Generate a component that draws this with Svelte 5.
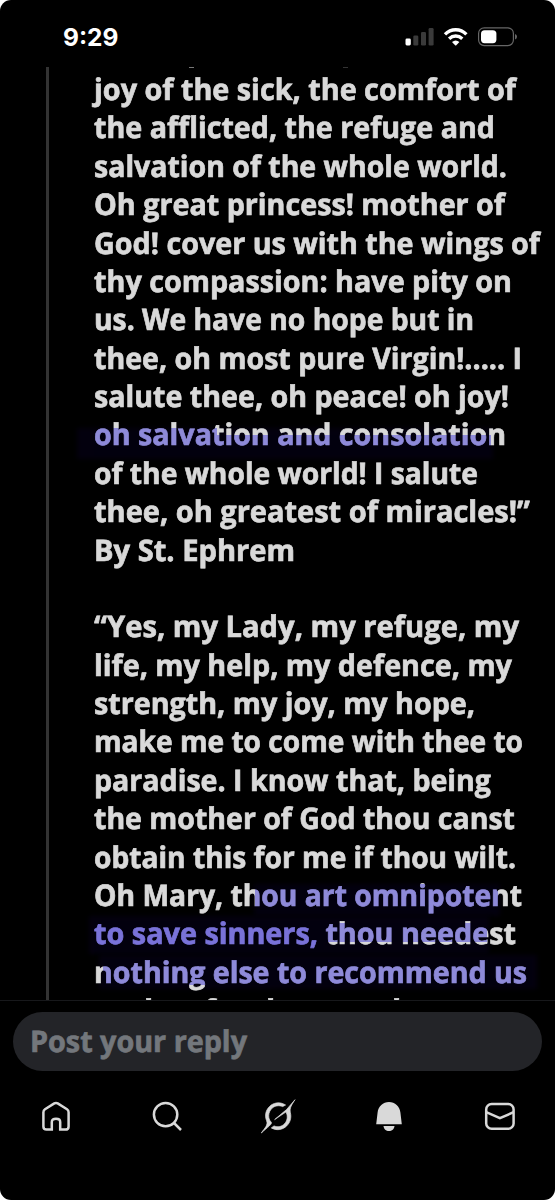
<script>
  const pitch = 38.38;
  // [text, right edge of the line]
  const lines = [
    ['joy of the sick, the comfort of', 516],
    ['the afflicted, the refuge and', 495],
    ['salvation of the whole world.', 507],
    ['Oh great princess! mother of', 505],
    ['God! cover us with the wings of', 540],
    ['thy compassion: have pity on', 512],
    ['us. We have no hope but in', 474],
    ['thee, oh most pure Virgin!..... I', 522],
    ['salute thee, oh peace! oh joy!', 509],
    ['oh salvation and consolation', 506],
    ['of the whole world! I salute', 478],
    ['thee, oh greatest of miracles!”', 530],
    ['By St. Ephrem', 295],
    ['', 0],
    ['“Yes, my Lady, my refuge, my', 519],
    ['life, my help, my defence, my', 512],
    ['strength, my joy, my hope,', 475],
    ['make me to come with thee to', 523],
    ['paradise. I know that, being', 491],
    ['the mother of God thou canst', 515],
    ['obtain this for me if thou wilt.', 516],
    ['Oh Mary, thou art omnipotent', 522],
    ['to save sinners, thou needest', 516],
    ['nothing else to recommend us', 527],
    ['to thee for thou art the', 428]
  ];
</script>

<div class="phone">
  <header>
    <span class="time">9:29</span>
    <svg class="status" width="116" height="24" viewBox="402 25 116 24">
      <rect x="405.5" y="38.5" width="5.3" height="7" rx="1.4" fill="#fff" />
      <g fill="#3a3a3a">
        <rect x="413.3" y="35.5" width="5" height="10" rx="1.3" />
        <rect x="421" y="32" width="5" height="13.5" rx="1.3" />
        <rect x="428.6" y="28" width="5" height="17.5" rx="1.3" />
      </g>
      <g fill="none" stroke="#fff" stroke-width="3.3">
        <path d="M445 34.4 C451 28.2 460.400 28.2 466.400 34.4" />
        <path d="M449.100 38.800 C453 35.100 458.400 35.100 462.300 38.800" />
      </g>
      <path d="M452 42 Q455.700 39 459.400 42 L456.300 45.200 Q455.700 45.800 455.100 45.200 Z" fill="#fff" />
      <rect x="478.600" y="27.800" width="34.800" height="17.800" rx="5.600" fill="none" stroke="#666" stroke-width="1.200" />
      <path d="M515 34 v5.600 q2-.8 2-2.800 t-2-2.800z" fill="#666" />
      <rect x="481" y="30.200" width="15.400" height="13" rx="3.600" fill="#fff" />
    </svg>
  </header>

  <main>
    <div class="thread"></div>
    <article>
      <i class="tail one"></i><i class="tail two"></i>
      <div class="glow a"></div>
      <div class="glow b"></div>
      <div class="glow c"></div>
      <div class="glow d"></div>
      {#each lines as [text, right]}
        <svg class="line" width="461" height={pitch} viewBox="0 0 461 {pitch}">
          {#if text}<text x="0" y="28.4" textLength={right - 94} lengthAdjust="spacingAndGlyphs">{text}</text>{/if}
        </svg>
      {/each}
      <div class="ink a1"></div>
      <div class="ink a2"></div>
      <div class="ink b1"></div>
      <div class="ink c1"></div>
      <div class="ink c2"></div>
      <div class="ink d1"></div>
    </article>
  </main>

  <footer>
    <div class="reply">
      <svg width="240" height="58" viewBox="0 0 240 58"><text x="0" y="39.500" textLength="217" lengthAdjust="spacingAndGlyphs">Post your reply</text></svg>
    </div>
    <nav>
      <svg viewBox="0 0 40 40"><path d="M7.400 16.200 Q7.400 14.300 9 13.200 L18.300 7.400 Q20 6.400 21.700 7.400 L31 13.200 Q32.600 14.300 32.600 16.200 V30.400 Q32.600 33.600 29.400 33.600 H24.200 V26 Q24.200 22.800 20 22.800 Q15.800 22.800 15.800 26 V33.600 H10.600 Q7.400 33.600 7.400 30.400 Z" /></svg>
      <svg viewBox="0 0 40 40"><circle cx="18.600" cy="18.600" r="11.700" /><path d="M27 27 L34 34" /></svg>
      <svg viewBox="0 0 40 40" class="solid"><path stroke="#d9d9d9" stroke-width=".7" d="M3.300 37 C7 31.700 10.200 29 8.600 24.800 C6.500 19.600 7.700 14.300 11.500 10.500 C15.300 6.700 20.900 5.900 25.500 7.900 L27.600 9 L24.700 10.600 C20.900 9 16.500 9.700 13.800 12.500 C10.100 16.200 9.400 22.300 13.300 26.300 C14.500 27.800 10 31 3.300 37 Z M16.600 23.600 L28.500 13.600 L37 3.700 C34 8.400 31.200 12 32.400 16.700 C33.600 21.900 32.200 26.400 28.700 29.900 C24.500 34.100 18.200 34.800 13.300 31.900 L16 29.900 C19.700 31.500 23.600 30.700 26.300 28 C29.300 25 30 20.600 28.400 16.900 C28.200 16.300 27.600 16.200 27.100 16.600 Z" /></svg>
      <svg viewBox="0 0 40 40" class="solid"><path d="M7.200 28.200 L8.600 16.600 C9.300 10.300 14 6 20 6 C26 6 30.700 10.300 31.400 16.600 L32.800 28.200 Z M14.500 30 H25.500 C25.300 33 22.900 35 20 35 C17.100 35 14.700 33 14.500 30 Z" /></svg>
      <svg viewBox="0 0 40 40"><rect x="6.200" y="8" width="27.400" height="24.800" rx="5.400" /><path d="M6.200 16.200 L19.900 22.200 L33.600 16.200" /></svg>
    </nav>
  </footer>
</div>

<style>
  :global(body) { background: #fff; }
  .phone {
    width: 555px;
    height: 1200px;
    background: #000;
    border-radius: 11px;
    overflow: hidden;
    display: flex;
    flex-direction: column;
  }
  header {
    height: 67px;
    flex: none;
    display: flex;
    justify-content: space-between;
    align-items: flex-start;
    padding: 25px 37px 0 63px;
    box-sizing: border-box;
  }
  .time {
    font: 700 24.500px/24px Inter, sans-serif;
    color: #fff;
    letter-spacing: 0;
  }
  main {
    height: 933px;
    flex: none;
    overflow: hidden;
    display: flex;
    padding-left: 46px;
  }
  .thread { width: 3px; background: #333; margin-right: 45px; flex: none; }
  article { position: relative; padding-top: 5px; isolation: isolate; background: #000; height: 928px; }
  .line { display: block; position: relative; overflow: visible; }
  text {
    font: 700 29.700px "Open Sans", sans-serif;
    font-variant-ligatures: none;
    fill: #d9d9d9;
    stroke: #d9d9d9;
    stroke-width: 0.7px;
    text-rendering: geometricPrecision;
  }
  .glow { position: absolute; background: #03000e; filter: blur(2px); }
  .a { left: -17px; top: 361px; width: 416px; height: 31px; }
  .b { left: 160px; top: 817px; width: 246px; height: 32px; }
  .c { left: -5px; top: 849px; width: 400px; height: 38px; }
  .d { left: 5px; top: 888px; width: 438px; height: 34px; }
  .ink { position: absolute; background: #a7a2ff; mix-blend-mode: multiply; }
  .a1 { left: 0; top: 361px; width: 123px; height: 28px; }
  .a2 { left: 123px; top: 368px; width: 274px; height: 20px; }
  .b1 { left: 161px; top: 817px; width: 243px; height: 35px; }
  .c1 { left: 0; top: 854px; width: 230px; height: 33px; background: #8e86ff; }
  .c2 { left: 230px; top: 856px; width: 163px; height: 19px; }
  .d1 { left: 9px; top: 892px; width: 429px; height: 26px; }
  .tail { position: absolute; top: 0; height: 1px; width: 5px; background: #777; }
  .one { left: 95px; }
  .two { left: 249px; background: #333; }
  footer {
    flex: 1;
    border-top: 1px solid #17181b;
    padding: 11px 13px 0;
  }
  .reply {
    height: 58.500px;
    border-radius: 30px;
    background: #232428;
    padding-left: 17px;
  }
  .reply svg { display: block; }
  .reply text { fill: #73777c; stroke: #73777c; }
  nav {
    margin: 25px -13px 0;
    display: grid;
    grid-template-columns: repeat(5, 1fr);
    justify-items: center;
  }
  nav svg {
    width: 40px;
    height: 40px;
    fill: none;
    stroke: #d9d9d9;
    stroke-width: 2.500;
  }
  nav svg.solid { fill: #d9d9d9; stroke: none; }
</style>
